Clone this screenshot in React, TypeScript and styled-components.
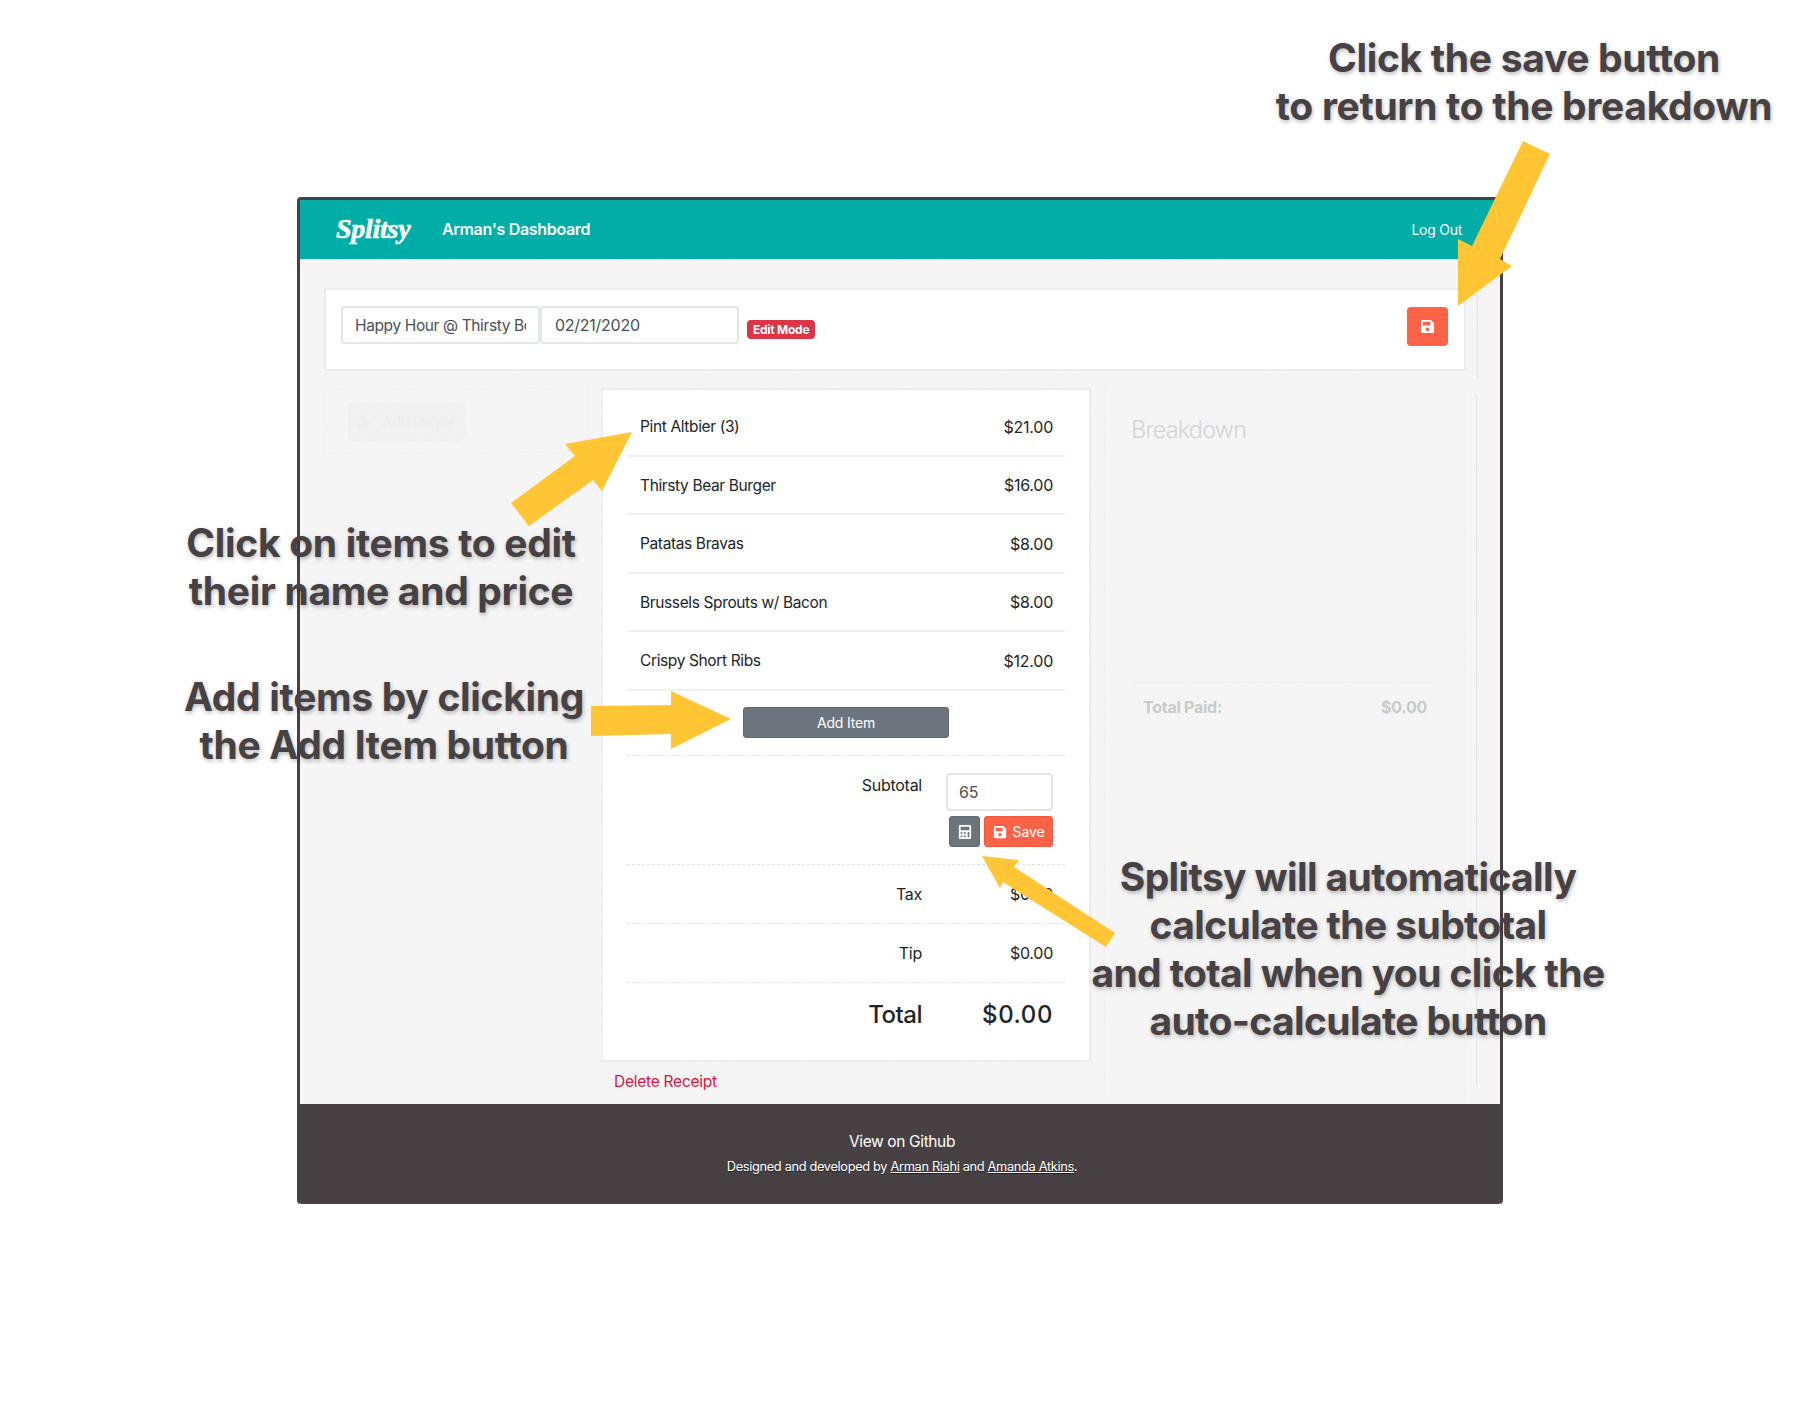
import { type FC } from 'react'
import styled, { createGlobalStyle } from 'styled-components'
import { FaCalculator, FaSave, FaUserPlus } from 'react-icons/fa'

const GlobalStyle = createGlobalStyle`
  html, body {
    margin: 0;
    background: #fff;
  }
  * {
    box-sizing: border-box;
  }
`

const UI_FONT = '"Inter", "Liberation Sans", sans-serif'

const Page = styled.div`
  position: relative;
  width: 1800px;
  height: 1402px;
  padding: 197px 297px 198px;
  overflow: hidden;
  font-family: ${UI_FONT};
  font-size: 16px;
  letter-spacing: -0.016em;
  color: #212529;
`

const Window = styled.div`
  width: 1206px;
  height: 1007px;
  display: flex;
  flex-direction: column;
  border: solid #474143;
  border-width: 3px 3px 0;
  border-radius: 4px;
  overflow: hidden;
`

const NavBar = styled.header`
  height: 59px;
  flex: none;
  display: flex;
  align-items: center;
  padding: 0 38px 1px 36px;
  background: #00ada7;
  color: #fff;
  box-shadow: 0 1px 1px rgba(0, 0, 0, 0.08);
`

const Logo = styled.div`
  width: 106px;
  font-family: "Liberation Serif", serif;
  font-size: 28px;
  font-weight: 700;
  font-style: italic;
  letter-spacing: -0.01em;
  -webkit-text-stroke: 0.6px #fff;
`

const NavTitle = styled.div`
  font-weight: 600;
  font-size: 16px;
  letter-spacing: -0.02em;
`

const LogOut = styled.a`
  margin-left: auto;
  font-size: 14px;
`

const Main = styled.main`
  height: 845px;
  flex: none;
  padding: 29px 0 0 24px;
  background-color: #f5f5f5;
  background-image: repeating-linear-gradient(
    135deg,
    rgba(255, 255, 255, 0.22) 0,
    rgba(255, 255, 255, 0.22) 1px,
    rgba(0, 0, 0, 0.004) 1px,
    rgba(0, 0, 0, 0.004) 3px
  );
`

const TopRow = styled.div`
  display: flex;
  height: 83px;
`

const Card = styled.section`
  background: #fff;
  border: 2px solid #e9edf1;
`

const TitleCard = styled(Card)`
  width: 1142px;
  display: flex;
  align-items: flex-start;
  padding: 16px 16px 0 15px;
`

const Edge = styled.div<{ $top: number; $height: number }>`
  width: 3px;
  height: ${p => p.$height}px;
  margin: ${p => p.$top}px 0 0 9px;
  border: solid #dfe4e9;
  border-width: 1px 1px 0 0;
  border-radius: 0 2px 0 0;
`

const Input = styled.input<{ $width: number; $pad: number }>`
  width: ${p => p.$width}px;
  height: 38px;
  padding: 0 ${p => p.$pad}px;
  border: 2px solid #e1e6eb;
  border-radius: 4px;
  background: #fff;
  font-family: ${UI_FONT};
  font-size: 16px;
  letter-spacing: -0.016em;
  color: #495057;
  outline: none;
`

const NameInput = styled(Input)`
  font-size: 15.5px;
  letter-spacing: -0.024em;
`

const Badge = styled.span`
  margin: 14px 0 0 8px;
  padding: 0 6px;
  height: 19px;
  line-height: 19px;
  border-radius: 4px;
  background: #dc3545;
  color: #fff;
  font-size: 12px;
  font-weight: 700;
`

const HeaderSave = styled.button`
  width: 41px;
  height: 39px;
  margin: 1px 0 0 auto;
  display: flex;
  align-items: center;
  justify-content: center;
  border: none;
  border-radius: 4px;
  background: #ff6347;
  color: #fff;
  font-size: 15px;
`

const Columns = styled.div`
  display: flex;
  align-items: flex-start;
  margin-top: 17px;
`

const PlayersPanel = styled.aside`
  width: 265px;
  height: 65px;
  padding: 13px 23px;
  border: 1px solid rgba(0, 0, 0, 0.015);
`

const GhostButton = styled.div`
  width: 117px;
  height: 39px;
  display: flex;
  align-items: center;
  gap: 9px;
  padding-left: 10px;
  border-radius: 4px;
  background: rgba(0, 0, 0, 0.014);
  color: #ededed;
  font-size: 15px;
  letter-spacing: -0.03em;
`

const CenterColumn = styled.div`
  width: 490px;
  margin: 0 13px 0 12px;
`

const Receipt = styled(Card)`
  height: 674px;
  padding: 8px 24px 0;
`

const ItemRow = styled.div`
  height: 58.5px;
  display: flex;
  align-items: center;
  justify-content: space-between;
  padding: 1px 12px 0 13px;
  border-bottom: 2px solid #edf0f3;
`

const ItemName = styled.span`
  font-size: 15.5px;
  letter-spacing: -0.024em;
`

const AddRow = styled.div`
  height: 65.5px;
  display: flex;
  align-items: center;
  justify-content: center;
  border-bottom: 1px dashed #dfe3e7;
`

const AddButton = styled.button`
  width: 206px;
  height: 31px;
  border: 1px solid #62696f;
  border-radius: 3px;
  background: #6c757d;
  color: #fff;
  font-family: ${UI_FONT};
  font-size: 14px;
  letter-spacing: -0.015em;
`

const SummaryRow = styled.div<{ $height: number; $center?: boolean }>`
  height: ${p => p.$height}px;
  display: flex;
  justify-content: flex-end;
  align-items: ${p => (p.$center ? 'center' : 'flex-start')};
  padding: ${p => (p.$center ? '0' : '17px')} 12px 0 0;
  border-bottom: 1px dashed #dfe3e7;
`

const SummaryLabel = styled.div`
  line-height: 24px;
`

const SummaryValue = styled.div`
  width: 107px;
  margin-left: 24px;
  text-align: right;
  line-height: 24px;
`

const SubtotalInput = styled(Input)`
  width: 107px;
  display: block;
`

const SubtotalButtons = styled.div`
  display: flex;
  justify-content: flex-end;
  gap: 4px;
  margin-top: 5px;
`

const CalcButton = styled.button`
  width: 31px;
  height: 31px;
  display: flex;
  align-items: center;
  justify-content: center;
  padding: 0;
  border: 1px solid #62696f;
  border-radius: 3px;
  background: #6c757d;
  color: #fff;
  font-size: 14px;
`

const SaveButton = styled.button`
  width: 69px;
  height: 31px;
  display: flex;
  align-items: center;
  justify-content: center;
  gap: 6px;
  padding: 0;
  border: 1px solid #f4583c;
  border-radius: 3px;
  background: #ff6347;
  color: #fff;
  font-family: ${UI_FONT};
  font-size: 14px;
  letter-spacing: -0.01em;
`

const TotalRow = styled.div`
  height: 63px;
  display: flex;
  justify-content: flex-end;
  align-items: center;
  padding-right: 12px;
  font-size: 24px;
  font-weight: 500;
  letter-spacing: -0.02em;
`

const TotalValue = styled.div`
  width: 131px;
  text-align: right;
  letter-spacing: 0.025em;
`

const DeleteLink = styled.a`
  display: block;
  margin: 8px 0 0 13px;
  line-height: 24px;
  font-size: 15.5px;
  letter-spacing: -0.016em;
  color: #dc143c;
`

const BreakdownPanel = styled.aside`
  width: 361px;
  height: 712px;
  padding: 19px 26px 0 26px;
  border: 1px solid rgba(0, 0, 0, 0.012);
`

const BreakdownTitle = styled.h2`
  margin: 0;
  height: 274px;
  font-size: 23.5px;
  font-weight: 300;
  line-height: 44px;
  letter-spacing: -0.035em;
  color: #d3d5d7;
`

const BreakdownFooter = styled.div`
  display: flex;
  justify-content: space-between;
  height: 48px;
  align-items: center;
  padding: 0 11px 0 12px;
  border-top: 1px solid #efefef;
  font-weight: 700;
  color: #c9caca;
`

const Footer = styled.footer`
  flex: 1;
  padding: 26px 0 0 4px;
  background: #474143;
  color: #fff;
  text-align: center;
`

const FooterLink = styled.div`
  font-size: 15.5px;
  line-height: 24px;
  letter-spacing: -0.024em;
`

const FooterNote = styled.div`
  margin-top: 3px;
  font-size: 12.8px;
  line-height: 20px;
  letter-spacing: -0.026em;
  text-shadow: 0 1px 1px rgba(0, 0, 0, 0.5);
`

const NoteLink = styled.a`
  color: #fff;
  text-decoration: underline;
`

const Arrows = styled.svg`
  position: absolute;
  inset: 0;
  width: 1800px;
  height: 1402px;
  pointer-events: none;
`

const Annotation = styled.div<{ $x: number; $y: number; $tight?: boolean }>`
  position: absolute;
  left: ${p => p.$x}px;
  top: ${p => p.$y}px;
  transform: translateX(-50%);
  white-space: nowrap;
  text-align: center;
  font-family: "Inter", "Liberation Sans", sans-serif;
  font-size: 39px;
  font-weight: 700;
  line-height: 48px;
  letter-spacing: ${p => (p.$tight ? '-0.016em' : '-0.008em')};
  color: #474143;
  text-shadow: 1px 2px 4px rgba(0, 0, 0, 0.28);
`

const items = [
  { name: 'Pint Altbier (3)', price: '$21.00' },
  { name: 'Thirsty Bear Burger', price: '$16.00' },
  { name: 'Patatas Bravas', price: '$8.00' },
  { name: 'Brussels Sprouts w/ Bacon', price: '$8.00' },
  { name: 'Crispy Short Ribs', price: '$12.00' }
]

const arrowPoints = [
  '1523,141 1550,154 1500,259 1512,266 1458,306 1458,239 1472,246',
  '632,432 602,491 593,480 529,526 511,503 575,456 565,444',
  '591,706 671,705 671,691 731,719 671,749 671,734 591,736',
  '982,856 1019,860 1014,867 1115,933 1106,947 1003,882 1000,888'
]

const App: FC = () => (
  <Page>
    <GlobalStyle />
    <Window>
      <NavBar>
        <Logo>Splitsy</Logo>
        <NavTitle>Arman's Dashboard</NavTitle>
        <LogOut>Log Out</LogOut>
      </NavBar>
      <Main>
        <TopRow>
          <TitleCard>
            <NameInput $width={199} $pad={12} readOnly value="Happy Hour @ Thirsty Bear" />
            <Input $width={199} $pad={13} readOnly value="02/21/2020" />
            <Badge>Edit Mode</Badge>
            <HeaderSave><FaSave /></HeaderSave>
          </TitleCard>
          <Edge $top={7} $height={83} />
        </TopRow>
        <Columns>
          <PlayersPanel>
            <GhostButton><FaUserPlus />Add Player</GhostButton>
          </PlayersPanel>
          <CenterColumn>
            <Receipt>
              {items.map(item => (
                <ItemRow key={item.name}>
                  <ItemName>{item.name}</ItemName>
                  <span>{item.price}</span>
                </ItemRow>
              ))}
              <AddRow>
                <AddButton>Add Item</AddButton>
              </AddRow>
              <SummaryRow $height={109}>
                <SummaryLabel>Subtotal</SummaryLabel>
                <SummaryValue>
                  <SubtotalInput $width={107} $pad={11} readOnly value="65" />
                  <SubtotalButtons>
                    <CalcButton><FaCalculator /></CalcButton>
                    <SaveButton><FaSave />Save</SaveButton>
                  </SubtotalButtons>
                </SummaryValue>
              </SummaryRow>
              <SummaryRow $height={59} $center>
                <SummaryLabel>Tax</SummaryLabel>
                <SummaryValue>$0.00</SummaryValue>
              </SummaryRow>
              <SummaryRow $height={59} $center>
                <SummaryLabel>Tip</SummaryLabel>
                <SummaryValue>$0.00</SummaryValue>
              </SummaryRow>
              <TotalRow>
                <div>Total</div>
                <TotalValue>$0.00</TotalValue>
              </TotalRow>
            </Receipt>
            <DeleteLink>Delete Receipt</DeleteLink>
          </CenterColumn>
          <BreakdownPanel>
            <BreakdownTitle>Breakdown</BreakdownTitle>
            <BreakdownFooter>
              <span>Total Paid:</span>
              <span>$0.00</span>
            </BreakdownFooter>
          </BreakdownPanel>
          <Edge $top={7} $height={690} />
        </Columns>
      </Main>
      <Footer>
        <FooterLink>View on Github</FooterLink>
        <FooterNote>
          Designed and developed by <NoteLink>Arman Riahi</NoteLink> and <NoteLink>Amanda Atkins</NoteLink>.
        </FooterNote>
      </Footer>
    </Window>

    <Arrows viewBox="0 0 1800 1402">
      {arrowPoints.map(points => <polygon key={points} points={points} fill="#ffc535" />)}
    </Arrows>

    <Annotation $x={1524} $y={34}>Click the save button<br />to return to the breakdown</Annotation>
    <Annotation $x={381} $y={519}>Click on items to edit<br />their name and price</Annotation>
    <Annotation $x={384} $y={673}>Add items by clicking<br />the Add Item button</Annotation>
    <Annotation $x={1348} $y={853} $tight>
      Splitsy will automatically<br />calculate the subtotal<br />and total when you click the<br />auto-calculate button
    </Annotation>
  </Page>
)

export default App
